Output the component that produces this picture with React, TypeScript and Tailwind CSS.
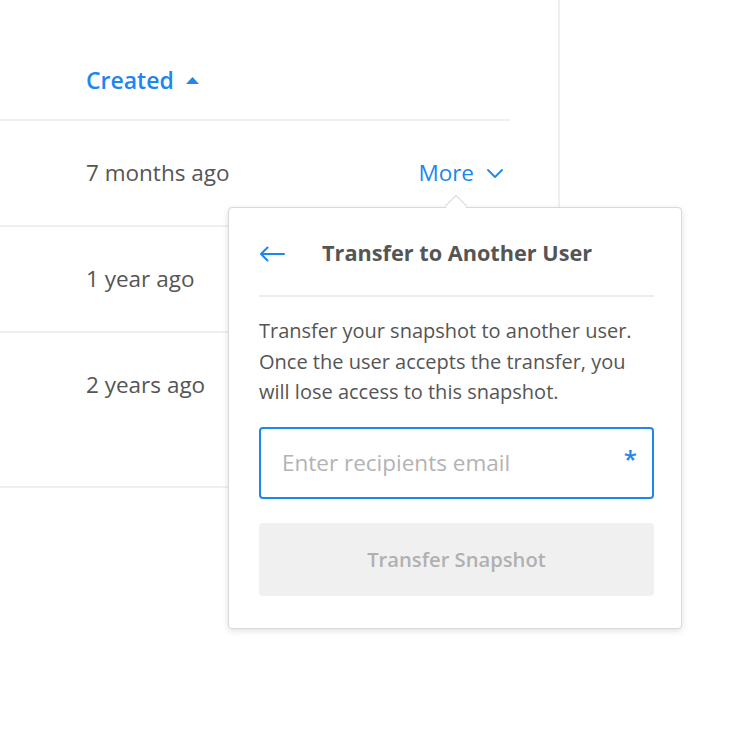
import React from "react";

const BLUE = "text-[#1b87ef]";

const ChevronDown = () => (
  <svg width="18" height="12" viewBox="0 0 18 12" fill="none" className="ml-[12px]">
    <path d="M2 3l7 7 7-7" stroke="#1b87ef" strokeWidth="1.8" strokeLinecap="round" strokeLinejoin="round" />
  </svg>
);

const SortUp = () => (
  <svg width="15" height="9" viewBox="0 0 15 9" className="ml-[11px]">
    <path d="M7.5 1l6.5 7H1z" fill="#1b87ef" />
  </svg>
);

const ArrowLeft = () => (
  <svg width="26" height="16" viewBox="0 0 26 16" fill="none">
    <path d="M25 8H2M8.5 1.5L2 8l6.5 6.5" stroke="#1b87ef" strokeWidth="2" strokeLinecap="round" strokeLinejoin="round" />
  </svg>
);

const Row: React.FC<{ label: string; tall?: boolean; more?: boolean }> = ({ label, tall, more }) => (
  <div className={`flex items-start border-b-2 border-[#efefef] pl-[86px] pr-[6px] pt-[38px] ${tall ? "h-[155px]" : "h-[106px]"}`}>
    <span className="text-[22.5px] leading-[28px] text-[#555]">{label}</span>
    {more && (
      <button type="button" className={`ml-auto flex items-center text-[22.5px] leading-[28px] ${BLUE}`}>
        More
        <ChevronDown />
      </button>
    )}
  </div>
);

export default function App() {
  return (
    <div className="relative h-[752px] w-[750px] overflow-hidden bg-white" style={{ fontFamily: "'Open Sans', Lato, sans-serif" }}>
      <div className="h-[488px] w-[560px] border-r-2 border-[#efefef]">
        <div className="w-[510px]">
          <div className="flex h-[121px] items-start border-b-2 border-[#efefef] pl-[86px] pt-[66px]">
            <span className={`flex items-center text-[23px] font-semibold leading-[28px] ${BLUE}`}>
              Created
              <SortUp />
            </span>
          </div>
          <Row label="7 months ago" more />
          <Row label="1 year ago" />
          <Row label="2 years ago" tall />
        </div>
      </div>

      {/* popover */}
      <div className="absolute left-[228px] top-[207px] w-[454px] rounded-[4px] border border-[#d9d9d9] bg-white pb-[32px] pl-[30px] pr-[27px] shadow-[0_2px_6px_rgba(0,0,0,0.12)]">
        <div className="absolute -top-[10px] left-[219px] h-[16px] w-[16px] rotate-45 border-l border-t border-[#d9d9d9] bg-white" />
        <div className="flex h-[89px] items-center border-b-2 border-[#ececec] pt-[4px]">
          <ArrowLeft />
          <h2 className="ml-[37px] text-[21.7px] font-bold text-[#555]">Transfer to Another User</h2>
        </div>
        <p className="mt-[19px] text-[20px] leading-[30.5px] text-[#555]">
          Transfer your snapshot to another user.
          <br />
          Once the user accepts the transfer, you
          <br />
          will lose access to this snapshot.
        </p>
        <div className="mt-[19px] flex h-[72px] items-center rounded-[4px] border-2 border-[#1b87ef] pl-[21px] pr-[15px]">
          <input
            className="min-w-0 flex-1 bg-transparent text-[22.5px] text-[#555] outline-none placeholder:text-[#b3b3b3]"
            placeholder="Enter recipients email"
          />
          <span className={`-mt-[8px] text-[24px] font-semibold ${BLUE}`}>*</span>
        </div>
        <button
          type="button"
          className="mt-[24px] flex h-[73px] w-full items-center justify-center rounded-[4px] bg-[#f0f0f0] text-[20.2px] font-semibold text-[#b0b0b0]"
        >
          Transfer Snapshot
        </button>
      </div>
    </div>
  );
}
